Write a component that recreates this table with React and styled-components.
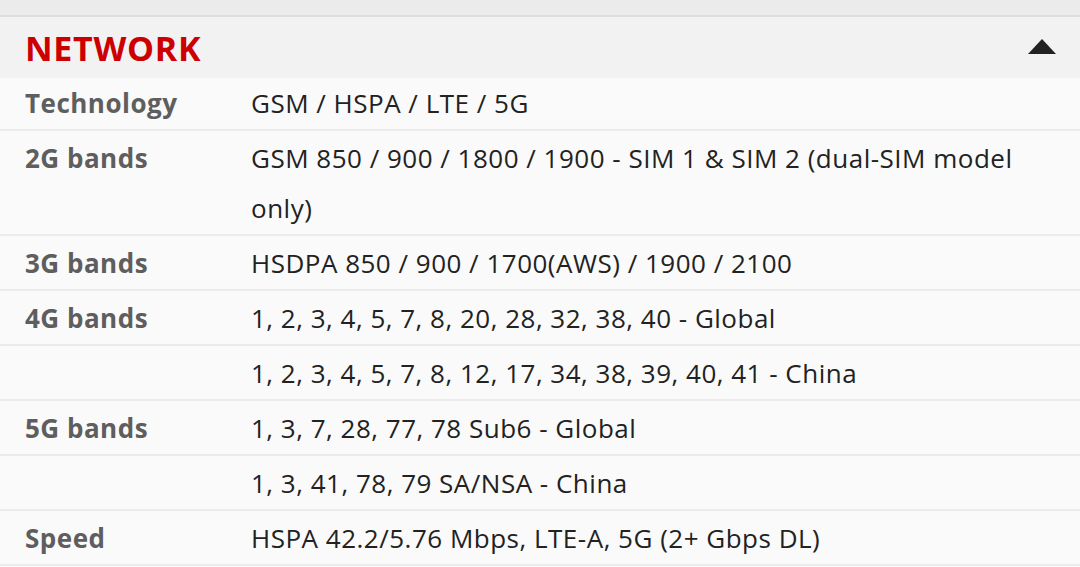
import styled, { createGlobalStyle } from "styled-components";

const GlobalStyle = createGlobalStyle`
  html, body {
    margin: 0;
    padding: 0;
    background-color: #fafafa;
  }

  body {
    font-family: "Open Sans", Roboto, sans-serif;
  }
`;

const Page = styled.div`
  width: 1080px;
  height: 567px;
  overflow: hidden;
  background-color: #fafafa;
`;

const TopStrip = styled.div`
  height: 15px;
  background-color: #ebebeb;
  border-bottom: 2px solid #dedede;
`;

const Header = styled.div`
  display: flex;
  align-items: center;
  justify-content: space-between;
  height: 61px;
  padding: 0 24px 0 25px;
  background-color: #f2f2f2;

  h2 {
    margin: 0;
    color: #cc0000;
    font-size: 34px;
    font-weight: 700;
    letter-spacing: 0.7px;
  }

  .toggle {
    width: 28px;
    height: 15px;
    margin-top: -2px;
  }
`;

const Row = styled.div`
  display: grid;
  grid-template-columns: 226px 1fr;
  padding: ${({ $first }) => ($first ? "0 0 1px" : "2px 0 1px")};
  padding-left: 25px;
  border-bottom: 2px solid #ebebeb;
  line-height: 50px;
  font-size: 26px;
  letter-spacing: 0.5px;

  .label {
    color: #5e5e5e;
    font-weight: 700;
  }

  .value {
    color: #222222;
    padding-right: 40px;
  }
`;

const specs = [
  ["Technology", "GSM / HSPA / LTE / 5G"],
  ["2G bands", "GSM 850 / 900 / 1800 / 1900 - SIM 1 & SIM 2 (dual-SIM model only)"],
  ["3G bands", "HSDPA 850 / 900 / 1700(AWS) / 1900 / 2100"],
  ["4G bands", "1, 2, 3, 4, 5, 7, 8, 20, 28, 32, 38, 40 - Global"],
  ["", "1, 2, 3, 4, 5, 7, 8, 12, 17, 34, 38, 39, 40, 41 - China"],
  ["5G bands", "1, 3, 7, 28, 77, 78 Sub6 - Global"],
  ["", "1, 3, 41, 78, 79 SA/NSA - China"],
  ["Speed", "HSPA 42.2/5.76 Mbps, LTE-A, 5G (2+ Gbps DL)"],
];

const App = () => {
  return (
    <Page>
      <GlobalStyle />
      <TopStrip />
      <Header>
        <h2>NETWORK</h2>
        <svg className="toggle" viewBox="0 0 28 15">
          <polygon points="14,0 28,15 0,15" fill="#222222" />
        </svg>
      </Header>
      {specs.map(([label, value], index) => (
        <Row key={`spec_${index}`} $first={index === 0}>
          <span className="label">{label}</span>
          <span className="value">{value}</span>
        </Row>
      ))}
    </Page>
  );
};

export default App;
